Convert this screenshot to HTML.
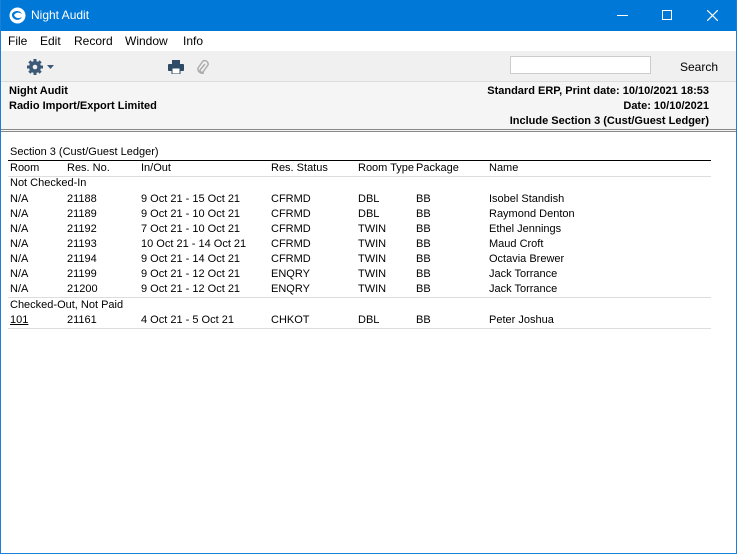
<!DOCTYPE html>
<html><head><style>
*{margin:0;padding:0;box-sizing:border-box}
body{width:737px;height:554px;overflow:hidden;background:#fff;font-family:Tahoma,"Liberation Sans","DejaVu Sans",sans-serif;font-size:11px;color:#000;position:relative}
.frame{position:absolute;left:0;top:0;width:737px;height:554px;border:1px solid #1a7fd6;border-top:none}
.title{position:absolute;left:0;top:0;width:737px;height:31px;background:#0078d7;color:#fff;font-size:12px}
.menu{position:absolute;left:1px;top:31px;width:735px;height:20px;background:#fff}
.menu span{position:absolute;top:3px;font-size:12px}
.tool{position:absolute;left:1px;top:51px;width:735px;height:31px;background:#f0f0f0;border-bottom:1px solid #dcdcdc}
.head{position:absolute;left:1px;top:82px;width:735px;height:50px;background:#f5f5f5;border-bottom:3px double #888}
.t{position:absolute;white-space:nowrap}
.b{font-weight:bold}
.line{position:absolute;left:8px;width:703px;height:1px;background:#ddd}
</style></head><body>
<div class="title">
<svg style="position:absolute;left:9px;top:7px" width="17" height="17" viewBox="0 0 17 17"><circle cx="8.5" cy="8.5" r="8" fill="#fff"/><path d="M3 7c2-4 8-4 10 0-3-2-6-2-8 1 1 3 5 4 8 2-2 4-8 4-10-1z" fill="#0078d7"/></svg>
<span class="t" style="left:31px;top:8px">Night Audit</span>
<div style="position:absolute;left:617px;top:15px;width:11px;height:1px;background:#fff"></div>
<div style="position:absolute;left:662px;top:10px;width:10px;height:10px;border:1px solid #fff"></div>
<svg style="position:absolute;left:707px;top:10px" width="11" height="11"><path d="M0 0L11 11M11 0L0 11" stroke="#fff" stroke-width="1.2"/></svg>
</div>
<div class="menu"><span style="left:7px">File</span><span style="left:39px">Edit</span><span style="left:73px">Record</span><span style="left:124px">Window</span><span style="left:182px">Info</span></div>
<div class="tool">
<svg style="position:absolute;left:25px;top:7px" width="18" height="18" viewBox="0 0 18 18"><g fill="#3c5a78"><circle cx="9" cy="9" r="6"/><rect x="7.5" y="1" width="3" height="16"/><rect x="1" y="7.5" width="16" height="3"/><rect x="7.5" y="1" width="3" height="16" transform="rotate(45 9 9)"/><rect x="7.5" y="1" width="3" height="16" transform="rotate(-45 9 9)"/></g><circle cx="9" cy="9" r="2.3" fill="#f0f0f0"/></svg>
<svg style="position:absolute;left:46px;top:14px" width="7" height="4"><path d="M0 0h7L3.5 4z" fill="#3c5a78"/></svg>
<svg style="position:absolute;left:167px;top:9px" width="16" height="14"><rect x="4" y="0" width="8" height="4" fill="#2d4a66"/><rect x="0" y="4" width="16" height="7" rx="1" fill="#2d4a66"/><rect x="4" y="8" width="8" height="6" fill="#fff" stroke="#2d4a66"/></svg>
<svg style="position:absolute;left:194px;top:8px" width="14" height="16"><path d="M10 5L5 11a2 2 0 0 0 3 2l5-7a3.5 3.5 0 0 0-5-4L3 9a4.5 4.5 0 0 0 6 5" fill="none" stroke="#aaa" stroke-width="1.4"/></svg>
<div style="position:absolute;left:509px;top:5px;width:141px;height:18px;background:#fff;border:1px solid #ccc"></div>
<span class="t" style="left:679px;top:9px;font-size:12px">Search</span>
</div>
<div class="head">
<span class="t b" style="left:8px;top:3px">Night Audit</span>
<span class="t b" style="left:8px;top:18px">Radio Import/Export Limited</span>
<span class="t b" style="right:27px;top:3px">Standard ERP, Print date: 10/10/2021 18:53</span>
<span class="t b" style="right:27px;top:18px">Date: 10/10/2021</span>
<span class="t b" style="right:27px;top:33px">Include Section 3 (Cust/Guest Ledger)</span>
</div>
<span class="t" style="left:10px;top:146px">Section 3 (Cust/Guest Ledger)</span>
<div class="line" style="top:160px;background:#000"></div>
<div id="rows"></div>
<div class="line" style="top:176px"></div>
<div class="line" style="top:297px"></div>
<div class="line" style="top:328px"></div>
<span class="t" style="left:10px;top:162px">Room</span><span class="t" style="left:67px;top:162px">Res. No.</span><span class="t" style="left:141px;top:162px">In/Out</span><span class="t" style="left:271px;top:162px">Res. Status</span><span class="t" style="left:358px;top:162px">Room Type</span><span class="t" style="left:416px;top:162px">Package</span><span class="t" style="left:489px;top:162px">Name</span>
<span class="t" style="left:10px;top:177px">Not Checked-In</span>
<span class="t" style="left:10px;top:193px">N/A</span><span class="t" style="left:67px;top:193px">21188</span><span class="t" style="left:141px;top:193px">9 Oct 21 - 15 Oct 21</span><span class="t" style="left:271px;top:193px">CFRMD</span><span class="t" style="left:358px;top:193px">DBL</span><span class="t" style="left:416px;top:193px">BB</span><span class="t" style="left:489px;top:193px">Isobel Standish</span>
<span class="t" style="left:10px;top:208px">N/A</span><span class="t" style="left:67px;top:208px">21189</span><span class="t" style="left:141px;top:208px">9 Oct 21 - 10 Oct 21</span><span class="t" style="left:271px;top:208px">CFRMD</span><span class="t" style="left:358px;top:208px">DBL</span><span class="t" style="left:416px;top:208px">BB</span><span class="t" style="left:489px;top:208px">Raymond Denton</span>
<span class="t" style="left:10px;top:223px">N/A</span><span class="t" style="left:67px;top:223px">21192</span><span class="t" style="left:141px;top:223px">7 Oct 21 - 10 Oct 21</span><span class="t" style="left:271px;top:223px">CFRMD</span><span class="t" style="left:358px;top:223px">TWIN</span><span class="t" style="left:416px;top:223px">BB</span><span class="t" style="left:489px;top:223px">Ethel Jennings</span>
<span class="t" style="left:10px;top:238px">N/A</span><span class="t" style="left:67px;top:238px">21193</span><span class="t" style="left:141px;top:238px">10 Oct 21 - 14 Oct 21</span><span class="t" style="left:271px;top:238px">CFRMD</span><span class="t" style="left:358px;top:238px">TWIN</span><span class="t" style="left:416px;top:238px">BB</span><span class="t" style="left:489px;top:238px">Maud Croft</span>
<span class="t" style="left:10px;top:253px">N/A</span><span class="t" style="left:67px;top:253px">21194</span><span class="t" style="left:141px;top:253px">9 Oct 21 - 14 Oct 21</span><span class="t" style="left:271px;top:253px">CFRMD</span><span class="t" style="left:358px;top:253px">TWIN</span><span class="t" style="left:416px;top:253px">BB</span><span class="t" style="left:489px;top:253px">Octavia Brewer</span>
<span class="t" style="left:10px;top:268px">N/A</span><span class="t" style="left:67px;top:268px">21199</span><span class="t" style="left:141px;top:268px">9 Oct 21 - 12 Oct 21</span><span class="t" style="left:271px;top:268px">ENQRY</span><span class="t" style="left:358px;top:268px">TWIN</span><span class="t" style="left:416px;top:268px">BB</span><span class="t" style="left:489px;top:268px">Jack Torrance</span>
<span class="t" style="left:10px;top:283px">N/A</span><span class="t" style="left:67px;top:283px">21200</span><span class="t" style="left:141px;top:283px">9 Oct 21 - 12 Oct 21</span><span class="t" style="left:271px;top:283px">ENQRY</span><span class="t" style="left:358px;top:283px">TWIN</span><span class="t" style="left:416px;top:283px">BB</span><span class="t" style="left:489px;top:283px">Jack Torrance</span>
<span class="t" style="left:10px;top:299px">Checked-Out, Not Paid</span>
<span class="t" style="left:10px;top:314px;text-decoration:underline">101</span><span class="t" style="left:67px;top:314px">21161</span><span class="t" style="left:141px;top:314px">4 Oct 21 - 5 Oct 21</span><span class="t" style="left:271px;top:314px">CHKOT</span><span class="t" style="left:358px;top:314px">DBL</span><span class="t" style="left:416px;top:314px">BB</span><span class="t" style="left:489px;top:314px">Peter Joshua</span>
<div class="frame"></div>
</body></html>
